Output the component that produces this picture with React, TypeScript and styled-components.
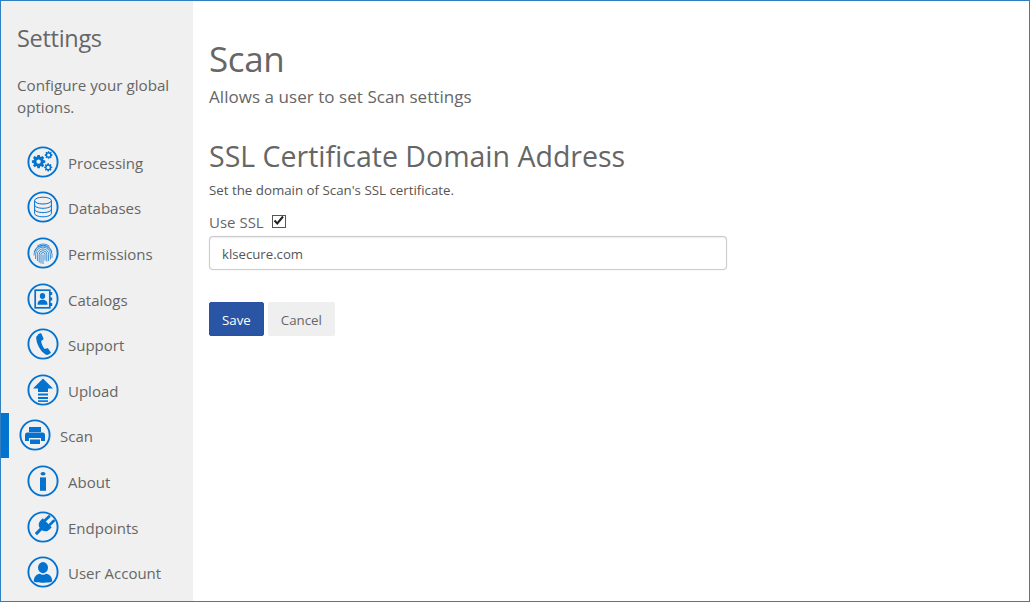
import React from "react";
import styled, { createGlobalStyle } from "styled-components";

const Global = createGlobalStyle`
  html, body { margin: 0; padding: 0; background: #fff; }
  * { box-sizing: border-box; }
`;

const Frame = styled.div`
  width: 1030px; height: 602px; border: 1px solid #2f7fc1; display: flex; overflow: hidden;
  font-family: "Open Sans", "Noto Sans", sans-serif; color: #666; background: #fff;
`;
const Sidebar = styled.aside`
  width: 192px; background: #f0f0f0; flex: none; display: flex; flex-direction: column;
`;
const SideHead = styled.div`padding: 22px 16px 0 16px;`;
const SideTitle = styled.h2`margin: 0; font-size: 23.5px; font-weight: 400; line-height: 30px; color: #666; letter-spacing: -0.3px;`;
const SideText = styled.p`margin: 21px 0 0; font-size: 15.2px; line-height: 22px; color: #666;`;
const Nav = styled.nav`margin-top: 22px; display: flex; flex-direction: column;`;
const NavRow = styled.div<{ $active?: boolean }>`
  height: ${p => (p.$active ? "45px" : "45.6px")};
  margin: ${p => (p.$active ? "-0.6px 0 1.2px" : "0")};
  padding-top: ${p => (p.$active ? "1px" : "0")};
  display: flex; align-items: center; gap: 9px;
  padding-left: ${p => (p.$active ? "10px" : "26px")};
  border-left: ${p => (p.$active ? "8px solid #0472cf" : "0")};
  font-size: 15px; color: #666;
`;
const Icon = styled.svg`width: 32px; height: 32px; flex: none; display: block; margin-top: -2px;`;
const Main = styled.main`flex: 1; padding: 36px 16px 0;`;
const Title = styled.h1`margin: 0; font-size: 35px; font-weight: 400; line-height: 44px; color: #666; letter-spacing: -0.4px;`;
const Sub = styled.p`margin: 4px 0 0; font-size: 17px; line-height: 24px; color: #666; letter-spacing: 0.05px;`;
const Section = styled.h2`margin: 28px 0 0; font-size: 28.5px; font-weight: 400; line-height: 38px; color: #666;`;
const Help = styled.p`margin: 6px 0 0; font-size: 13.3px; line-height: 18px; color: #555;`;
const CheckRow = styled.label`display: flex; align-items: center; gap: 8px; margin-top: 13px; height: 20px; font-size: 15px; color: #666;`;
const CheckBox = styled.span`width: 14px; height: 13px; border: 1px solid #555; background: #fff; display: block; position: relative; margin-top: -1px;`;
const CheckMark = styled.svg`position: absolute; left: -1px; top: -2px; width: 13px; height: 13px;`;
const Input = styled.input`
  display: block; width: 518px; height: 34px; margin-top: 4px; padding: 2px 12px 0; border: 1px solid #ccc; border-radius: 4px;
  font: inherit; font-size: 13.2px; color: #555; outline: none; box-shadow: inset 0 1px 1px rgba(0,0,0,.075), 0 0 1px rgba(0,0,0,.2);
`;
const Buttons = styled.div`display: flex; gap: 4px; margin-top: 32px;`;
const Button = styled.button<{ $primary?: boolean }>`
  height: 34px; padding: 2px 12px 0; border-radius: 2px; font: inherit; font-size: 13.3px;
  border: 1px solid ${p => (p.$primary ? "#2a52a0" : "#efefef")};
  background: ${p => (p.$primary ? "#2a55a5" : "#efefef")};
  color: ${p => (p.$primary ? "#fff" : "#666")};
`;

const B = "#0472cf";

function gearPath(cx: number, cy: number, ro: number, ri: number, hole: number, teeth: number) {
  let d = "";
  const step = (Math.PI * 2) / teeth;
  for (let i = 0; i < teeth; i++) {
    const a = i * step;
    const pts: [number, number][] = [
      [ri, a - step * 0.42],
      [ro, a - step * 0.22],
      [ro, a + step * 0.22],
      [ri, a + step * 0.42],
    ];
    pts.forEach(([r, t], j) => {
      d += `${i === 0 && j === 0 ? "M" : "L"}${(cx + r * Math.cos(t)).toFixed(2)} ${(cy + r * Math.sin(t)).toFixed(2)}`;
    });
  }
  d += `Z M${cx + hole} ${cy}a${hole} ${hole} 0 1 0 ${-2 * hole} 0a${hole} ${hole} 0 1 0 ${2 * hole} 0Z`;
  return d;
}

const Ring = ({ children }: { children?: React.ReactNode }) => (
  <Icon viewBox="0 0 32 32">
    <circle cx="16" cy="16" r="14.6" fill="none" stroke={B} strokeWidth="1.9" />
    {children}
  </Icon>
);

const icons: Record<string, React.ReactNode> = {
  Processing: (
    <g fill={B} fillRule="evenodd">
      <path d={gearPath(11.6, 15.6, 6.8, 5, 2.2, 8)} />
      <path d={gearPath(21.6, 9, 3.9, 2.8, 1.5, 8)} />
      <path d={gearPath(21.2, 21.4, 4.1, 3, 1.6, 8)} />
    </g>
  ),
  Databases: (
    <g fill="none" stroke={B} strokeWidth="1">
      <ellipse cx="16" cy="9.6" rx="8.4" ry="3.4" />
      <path d="M7.6 9.6v12.8c0 1.9 3.8 3.4 8.4 3.4s8.4-1.5 8.4-3.4V9.6M7.6 13.9c0 1.9 3.8 3.4 8.4 3.4s8.4-1.5 8.4-3.4M7.6 18.2c0 1.9 3.8 3.4 8.4 3.4s8.4-1.5 8.4-3.4" />
    </g>
  ),
  Permissions: (
    <g fill="none" stroke={B} strokeWidth="0.75">
      <path d="M10 9.2a10 10 0 0 1 12.5 0" />
      <path d="M7.4 15a9 9 0 0 1 17.4 0" />
      <path d="M7 18.5a9 9 0 0 1 18-1.2v3.5" />
      <path d="M8.6 22v-4.5a7.4 7.4 0 0 1 14.8 0v5" />
      <path d="M10.4 24v-6.5a5.6 5.6 0 0 1 11.2 0v6.5" />
      <path d="M12.2 25.5v-8a3.8 3.8 0 0 1 7.6 0v7" />
      <path d="M14 26.5v-9a2 2 0 0 1 4 0v6" />
      <path d="M16 17.5v9.5" />
    </g>
  ),
  Catalogs: (
    <g>
      <rect x="8.2" y="7.2" width="14.6" height="17.6" fill="none" stroke={B} strokeWidth="1.7" />
      <rect x="23" y="9" width="2.2" height="3" fill={B} />
      <rect x="23" y="14.5" width="2.2" height="3" fill={B} />
      <rect x="23" y="20" width="2.2" height="3" fill={B} />
      <ellipse cx="15.5" cy="13" rx="2.7" ry="3" fill={B} />
      <path d="M10.5 21.8c0-3.6 2-5 5-5s5 1.4 5 5z" fill={B} />
    </g>
  ),
  Support: <path fill={B} d="M11 6.2l2.4-.9c.5-.2.9 0 1.1.5l2 4.6c.2.4.1.8-.3 1.1l-2 1.5c.2 2.9 1.6 6 3.5 8l2.4-.8c.4-.1.8 0 1 .4l2.6 3.6c.3.4.2.9-.2 1.1l-2 1.3c-.9.6-2.1.5-3-.1-5-3.2-9-10.4-9.3-16.5-.1-1.1.6-2.1 1.8-2.9z" />,
  Upload: (
    <g fill={B}>
      <path d="M16 4.5L26 14.5H21V18H11V14.5H6z" />
      <rect x="11" y="19.5" width="10" height="2" />
      <rect x="11" y="23" width="10" height="2" />
      <rect x="11" y="26.3" width="10" height="1.6" />
    </g>
  ),
  Scan: (
    <g fill={B}>
      <path d="M10 8h12v5H10z" />
      <path d="M8.5 13.5h15a2.5 2.5 0 0 1 2.5 2.5v6h-4v-3H10v3H6v-6a2.5 2.5 0 0 1 2.5-2.5z" />
      <path d="M11 20.5h10V25H11z" />
    </g>
  ),
  About: (
    <g fill={B}>
      <ellipse cx="16" cy="8.8" rx="2.5" ry="1.7" />
      <rect x="13" y="12.4" width="6" height="13.4" />
    </g>
  ),
  Endpoints: (
    <g fill={B} transform="translate(1 -1) rotate(45 16 16)">
      <rect x="11.4" y="4.5" width="2.8" height="7.5" rx="0.8" />
      <rect x="17.8" y="4.5" width="2.8" height="7.5" rx="0.8" />
      <path d="M9.6 11.5h12.8v3c0 3.2-2.2 5.4-4.9 6V27.5h-3V20.5c-2.7-.6-4.9-2.8-4.9-6z" />
    </g>
  ),
  "User Account": (
    <g fill={B}>
      <ellipse cx="16" cy="11.6" rx="5" ry="5.6" />
      <path d="M6.8 25.5c0-5 2.8-7.3 6-7.8 1.8 1.4 4.6 1.4 6.4 0 3.2.5 6 2.8 6 7.8-2 1.6-16.4 1.6-18.4 0z" />
    </g>
  ),
};
const items = ["Processing", "Databases", "Permissions", "Catalogs", "Support", "Upload", "Scan", "About", "Endpoints", "User Account"];

export default function App() {
  return (
    <>
      <Global />
      <Frame>
        <Sidebar>
          <SideHead>
            <SideTitle>Settings</SideTitle>
            <SideText>Configure your global options.</SideText>
          </SideHead>
          <Nav>
            {items.map(n => (
              <NavRow key={n} $active={n === "Scan"}>
                <Ring>{icons[n]}</Ring>
                <span>{n}</span>
              </NavRow>
            ))}
          </Nav>
        </Sidebar>
        <Main>
          <Title>Scan</Title>
          <Sub>Allows a user to set Scan settings</Sub>
          <Section>SSL Certificate Domain Address</Section>
          <Help>Set the domain of Scan's SSL certificate.</Help>
          <CheckRow>
            Use SSL
            <CheckBox>
              <CheckMark viewBox="0 0 13 13">
                <path d="M2.5 6.5l2.8 3L11 2.5" fill="none" stroke="#222" strokeWidth="2" />
              </CheckMark>
            </CheckBox>
          </CheckRow>
          <Input defaultValue="klsecure.com" />
          <Buttons>
            <Button $primary>Save</Button>
            <Button>Cancel</Button>
          </Buttons>
        </Main>
      </Frame>
    </>
  );
}
